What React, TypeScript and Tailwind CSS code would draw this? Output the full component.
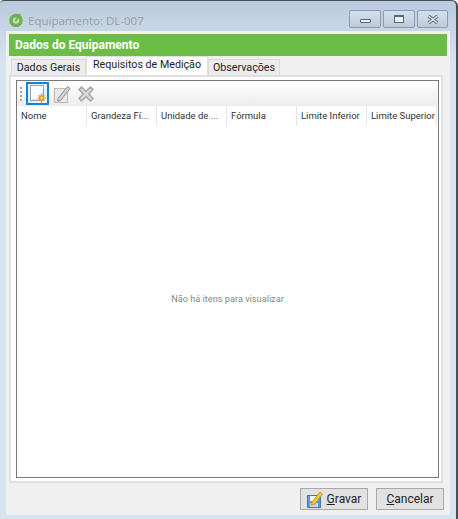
import React from "react";

function NewIcon() {
  return (
    <svg width="19" height="19" viewBox="0 0 19 19">
      <rect x="2.5" y="1.5" width="13" height="15" fill="#fbfcfe" stroke="#8fa4bf" />
      <path d="M3.5 15.5H14.5V8" fill="none" stroke="#d5deea" />
      <circle cx="13.5" cy="14" r="3" fill="#ef9a2c" />
      <circle cx="13.5" cy="14" r="1.2" fill="#fde08a" />
      <path d="M13.5 9.5V11M13.5 17V18.5M9 14H10.5M16.5 14H18M10.5 11L11.5 12M16.5 11L15.5 12M10.5 17L11.5 16M16.5 17L15.5 16" stroke="#ea8a2a" />
    </svg>
  );
}

function EditIcon() {
  return (
    <svg width="17" height="18" viewBox="0 0 17 18">
      <rect x="0.5" y="3.5" width="13" height="14" fill="#e8e8e8" stroke="#bcbcbc" />
      <path d="M4 13.5L13.5 1.5L16 3.5L6.5 15.5L3.5 16Z" fill="#d2d2d2" stroke="#8e8e8e" />
    </svg>
  );
}

function DeleteIcon() {
  return (
    <svg width="16" height="16" viewBox="0 0 16 16">
      <path
        d="M3.5 1L8 5.2L12.5 1L15 3.5L10.8 8L15 12.5L12.5 15L8 10.8L3.5 15L1 12.5L5.2 8L1 3.5Z"
        fill="#d9d9d9"
        stroke="#a8a8a8"
        strokeWidth="1.5"
        strokeLinejoin="round"
      />
    </svg>
  );
}

function SaveIcon() {
  return (
    <svg width="16" height="17" viewBox="0 0 16 17">
      <rect x="0.5" y="4.5" width="13" height="12" fill="#5a9ae0" stroke="#3f78bd" />
      <rect x="3" y="5" width="8" height="5" fill="#f3f7fc" />
      <rect x="3" y="12" width="8" height="4" fill="#c4d6ea" />
      <path d="M5 11L13 1L15.5 3L8 13L4.5 14Z" fill="#f5c72e" stroke="#b98a1a" strokeWidth="0.8" />
    </svg>
  );
}

const columns = ["Nome", "Grandeza Fí...", "Unidade de ...", "Fórmula", "Limite Inferior", "Limite Superior"];

function WinButton({ w, children }: { w: string; children: React.ReactNode }) {
  return (
    <div className={`${w} h-[18px] flex items-center justify-center rounded-[2px] border border-[#8d9bb0] bg-gradient-to-b from-[#d5e0ec] to-[#bccbdd]`}>
      {children}
    </div>
  );
}

export default function App() {
  return (
    <div className="font-['Roboto',Arial,sans-serif] w-[458px] h-[519px] overflow-hidden border-t border-r-2 border-[#4a4f55] rounded-tr-[6px] rounded-tl-[4px] bg-gradient-to-b from-[#bacbdd] to-[#d6e4f2] to-[12%]">
      {/* title bar */}
      <div className="h-[30px] flex items-start pl-[9px]">
        <svg width="15" height="15" viewBox="0 0 15 15" className="mt-[11px] mr-[4px]">
          <circle cx="7" cy="8.5" r="5" fill="none" stroke="#6cb33f" strokeWidth="3.4" />
          <path d="M6.5 9L11 2" stroke="#6cb33f" strokeWidth="2" />
        </svg>
        <span className="mt-[10px] font-['Open_Sans',sans-serif] text-[11.5px] leading-[20px] text-[#979ea6]">Equipamento: DL-007</span>
        <div className="ml-auto mt-[9px] mr-[8px] flex gap-[2px]">
          <WinButton w="w-[32px]">
            <div className="w-[11px] h-[4px] border border-[#5c6673] bg-[#eef2f6] rounded-[1px] mt-[4px]" />
          </WinButton>
          <WinButton w="w-[32px]">
            <div className="w-[10px] h-[8px] border border-[#5c6673] border-t-2 bg-[#eef2f6]" />
          </WinButton>
          <WinButton w="w-[31px]">
            <svg width="14" height="11" viewBox="0 0 14 11">
              <path d="M2.5 2L11.5 9M11.5 2L2.5 9" stroke="#5c6673" strokeWidth="3.4" />
              <path d="M2.5 2L11.5 9M11.5 2L2.5 9" stroke="#eef2f6" strokeWidth="1.4" />
            </svg>
          </WinButton>
        </div>
      </div>
      {/* client area */}
      <div className="ml-[6px] w-[444px] h-[484px] bg-[#f0f0f0] px-[3px] pt-[3px]">
        <div className="h-[22px] bg-[#6cbd45] flex items-center pl-[6px]">
          <span className="text-[12px] font-bold text-white">Dados do Equipamento</span>
        </div>
        {/* tabs */}
        <div className="h-[19px] flex items-end text-[10.7px] text-[#222] pl-[2px]">
          <div className="h-[16px] w-[75px] pt-[1px] flex items-center justify-center bg-[#ececec] border border-b-0 border-[#d9d9d9]">Dados Gerais</div>
          <div className="h-[19px] w-[122px] pb-[1px] flex items-center justify-center bg-white border-x border-t border-[#e0e0e0]">Requisitos de Medição</div>
          <div className="h-[16px] w-[72px] pt-[1px] flex items-center justify-center bg-[#ececec] border border-b-0 border-[#d9d9d9]">Observações</div>
        </div>
        {/* tab panel */}
        <div className="w-[434px] h-[408px] bg-white border-2 border-[#e0e0e0] pl-[5px] pr-[2px] py-[3px]">
          <div className="h-full border border-[#7a7a7a] flex flex-col">
            <div className="h-[25px] shrink-0 flex items-center pl-[3px] bg-gradient-to-b from-white to-[#ececec]">
              <div className="flex flex-col gap-[2px]">
                <div className="w-[2px] h-[2px] bg-[#a8a8a8]" />
                <div className="w-[2px] h-[2px] bg-[#a8a8a8]" />
                <div className="w-[2px] h-[2px] bg-[#a8a8a8]" />
                <div className="w-[2px] h-[2px] bg-[#a8a8a8]" />
              </div>
              <div className="ml-[4px] w-[23px] h-[23px] border-2 border-[#1681d8] bg-[#e6f2fb] flex items-center justify-center">
                <NewIcon />
              </div>
              <div className="ml-[5px]"><EditIcon /></div>
              <div className="ml-[7px]"><DeleteIcon /></div>
            </div>
            <div className="h-[25px] shrink-0 flex text-[9.5px] text-[#333] pb-[5px]">
              {columns.map((c) => (
                <div key={c} className="w-[70px] flex items-center pl-[4px] border-r border-[#e6e6e6] whitespace-nowrap">
                  {c}
                </div>
              ))}
            </div>
            <div className="flex-1 flex items-center justify-center text-[9.2px] text-[#888] pb-[11px]">
              Não há itens para visualizar
            </div>
          </div>
        </div>
        {/* footer */}
        <div className="flex justify-end gap-[8px] mt-[5px] mr-[3px]">
          <button className="w-[68px] h-[22px] flex items-center justify-center gap-[4px] bg-[#e2e2e2] border border-[#a8a8a8] text-[12px] text-[#222]">
            <SaveIcon />
            <span><span className="underline">G</span>ravar</span>
          </button>
          <button className="w-[68px] h-[22px] flex items-center justify-center bg-[#e2e2e2] border border-[#a8a8a8] text-[12px] text-[#222]">
            <span><span className="underline">C</span>ancelar</span>
          </button>
        </div>
      </div>
    </div>
  );
}
